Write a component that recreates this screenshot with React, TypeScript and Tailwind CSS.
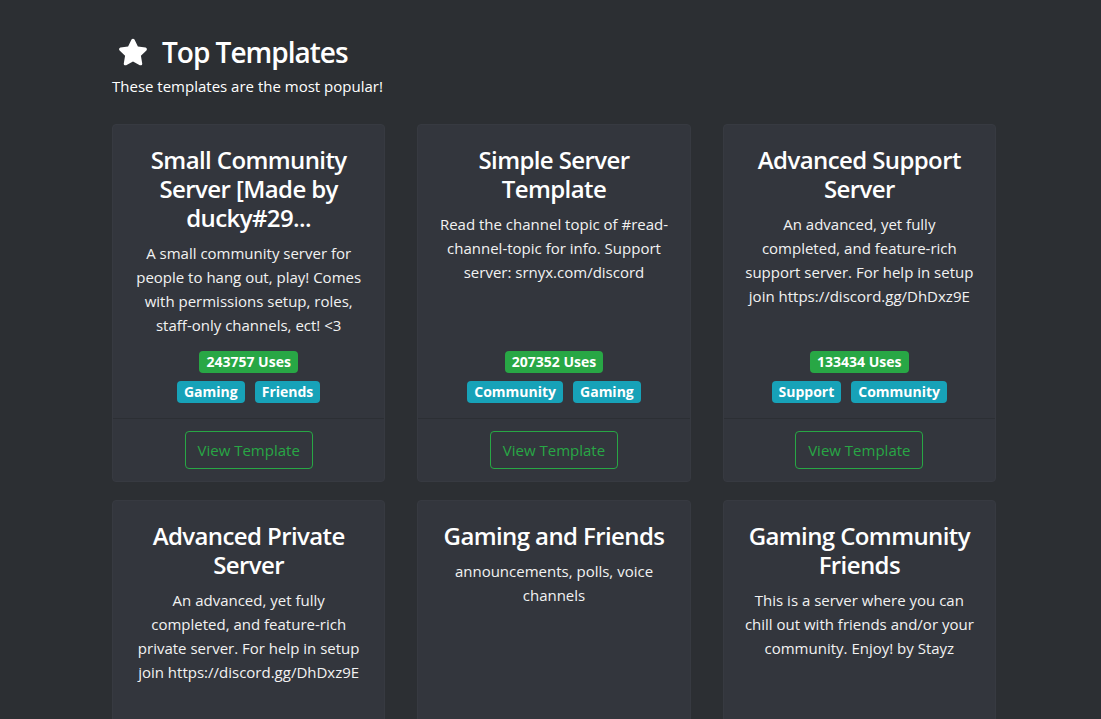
import { FaStar } from 'react-icons/fa'

interface Template {
  title: string
  description: string
  uses?: number
  tags?: string[]
}

const templates: Template[] = [
  {
    title: 'Small Community Server [Made by ducky#29...',
    description:
      'A small community server for people to hang out, play! Comes with permissions setup, roles, staff-only channels, ect! <3',
    uses: 243757,
    tags: ['Gaming', 'Friends'],
  },
  {
    title: 'Simple Server Template',
    description: 'Read the channel topic of #read-channel-topic for info. Support server: srnyx.com/discord',
    uses: 207352,
    tags: ['Community', 'Gaming'],
  },
  {
    title: 'Advanced Support Server',
    description:
      'An advanced, yet fully completed, and feature-rich support server. For help in setup join https://discord.gg/DhDxz9E',
    uses: 133434,
    tags: ['Support', 'Community'],
  },
  {
    title: 'Advanced Private Server',
    description:
      'An advanced, yet fully completed, and feature-rich private server. For help in setup join https://discord.gg/DhDxz9E',
  },
  {
    title: 'Gaming and Friends',
    description: 'announcements, polls, voice channels',
  },
  {
    title: 'Gaming Community Friends',
    description: 'This is a server where you can chill out with friends and/or your community. Enjoy! by Stayz',
  },
]

function TemplateCard({ template }: { template: Template }) {
  return (
    <div className="flex flex-col rounded-[4px] border border-[#373a41] bg-[#33363d]">
      <div className="flex min-h-[293px] flex-1 flex-col px-[20px] pt-[20px] pb-[15px] text-center">
        <h4 className="mb-[9px] text-[24px] font-semibold leading-[29px] tracking-[-0.6px] text-white">
          {template.title}
        </h4>
        <p className="text-[15px] leading-[24px] text-[#f2f2f2] [overflow-wrap:anywhere]">
          {template.description}
        </p>
        <div className="mt-auto pt-[12px]">
          {template.uses !== undefined && (
            <div>
              <span className="inline-block rounded-[4px] bg-[#28a745] px-[7px] text-[14px] font-bold leading-[22px] text-white">
                {template.uses} Uses
              </span>
            </div>
          )}
          {template.tags && (
            <div className="mt-[8px] flex justify-center gap-[10px]">
              {template.tags.map((tag) => (
                <span
                  key={tag}
                  className="inline-block rounded-[4px] bg-[#17a2b8] px-[7px] text-[14px] font-bold leading-[22px] text-white"
                >
                  {tag}
                </span>
              ))}
            </div>
          )}
        </div>
      </div>
      <div className="flex justify-center border-t border-[#2c2f34] py-[12px]">
        <button className="h-[38px] rounded-[4px] border border-[#28a745] px-[12px] text-[15px] text-[#28a745]">
          View Template
        </button>
      </div>
    </div>
  )
}

export default function App() {
  return (
    <div className="min-h-screen bg-[#2c2f33] font-['Open_Sans',sans-serif] text-white">
      <div className="ml-[112px] w-[884px] pt-[34px]">
        {/* Header */}
        <h2 className="flex items-center gap-[14px] pl-[6px] text-[28px] font-semibold leading-[36px] tracking-[-1px]">
          <FaStar className="h-[30px] w-[30px]" />
          Top Templates
        </h2>
        <p className="mt-[4px] text-[15px] leading-[24px]">These templates are the most popular!</p>

        {/* Grid */}
        <div className="mt-[26px] grid grid-cols-3 gap-x-[32px] gap-y-[18px]">
          {templates.map((t) => (
            <TemplateCard key={t.title} template={t} />
          ))}
        </div>
      </div>
    </div>
  )
}
